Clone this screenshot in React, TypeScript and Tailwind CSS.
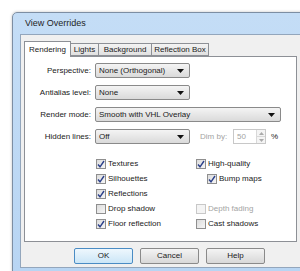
import React from 'react'

const tabs = [
  { title: 'Rendering', w: 'w-[47px]', active: true },
  { title: 'Lights', w: 'w-[28px]' },
  { title: 'Background', w: 'w-[53px]' },
  { title: 'Reflection Box', w: 'w-[57px]' },
]

const rows = [
  { label: 'Perspective:', value: 'None (Orthogonal)', w: 'w-[95px]' },
  { label: 'Antialias level:', value: 'None', w: 'w-[95px]' },
  { label: 'Render mode:', value: 'Smooth with VHL Overlay', w: 'w-[186px]' },
]

function Arrow() {
  return (
    <svg width="7" height="4" viewBox="0 0 7 4">
      <path d="M0 0h7L3.5 4z" fill="#111" />
    </svg>
  )
}

function Combo({ value, w }: { value: string; w: string }) {
  return (
    <div className={`${w} h-[15px] flex items-center justify-between rounded-[2px] border border-[#8a8a8a] bg-linear-to-b from-[#f4f4f4] to-[#dadada] pl-[3px] pr-[5px]`}>
      <span>{value}</span>
      <Arrow />
    </div>
  )
}

function Check({ label, checked, disabled }: { label: string; checked?: boolean; disabled?: boolean }) {
  return (
    <div className="flex h-[15px] items-center gap-[2px]">
      <div className={`flex h-[10px] w-[10px] items-center justify-center border ${disabled ? 'border-[#c8c8c8] bg-[#f4f4f4]' : 'border-[#8f8f8f] bg-linear-to-br from-[#dcdcdc] to-[#f6f6f6]'}`}>
        {checked && (
          <svg width="8" height="8" viewBox="0 0 8 8">
            <path d="M1 4.5L3 6.8L7 1" fill="none" stroke="#2a3f8a" strokeWidth="1.4" />
          </svg>
        )}
      </div>
      <span className={disabled ? 'text-[#a3a3a3]' : ''}>{label}</span>
    </div>
  )
}

function Button({ title, main }: { title: string; main?: boolean }) {
  return (
    <div
      className={`flex h-[16px] w-[59px] items-center justify-center rounded-[2px] border ${
        main
          ? 'border-[#4a8cc4] bg-linear-to-b from-[#eef7fd] to-[#cbe6f7]'
          : 'border-[#8a8a8a] bg-linear-to-b from-[#f4f4f4] to-[#d8d8d8]'
      }`}
    >
      {title}
    </div>
  )
}

export default function App() {
  return (
    <div className="h-[271px] w-[300px] overflow-hidden bg-white pl-[12px] pt-[12px] font-[family-name:Liberation_Sans,Arial,sans-serif] text-[8px] text-[#1a1a1a]">
      {/* Window frame */}
      <div className="w-[300px] rounded-tl-[5px] border border-[#7d8ea3] bg-linear-to-b from-[#c4ddf6] to-[#b8d5f3] px-[7px] pb-[3px] shadow-[0_0_3px_rgba(0,0,0,0.25)]">
        <div className="flex h-[21px] items-center pl-[5px] text-[9px] text-[#1e1e1e]">View Overrides</div>

        {/* Client area */}
        <div className="h-[234px] border border-[#93a6bc] bg-[#f0f0f0] pl-[3px] pt-[6px]">
          {/* Tabs */}
          <div className="flex h-[15px] items-end">
            {tabs.map((tab) => (
              <div
                key={tab.title}
                className={`${tab.w} flex items-center justify-center border border-[#8d9096] ${
                  tab.active
                    ? 'relative z-10 -mb-px h-[16px] border-b-0 bg-white'
                    : 'h-[13px] border-l-0 bg-linear-to-b from-[#f3f3f3] to-[#e1e1e1]'
                }`}
              >
                {tab.title}
              </div>
            ))}
          </div>

          {/* Panel */}
          <div className="h-[186px] w-[273px] border border-[#8d9096] bg-white pt-[6px]">
            <div className="flex flex-col gap-[7px]">
              {rows.map((row) => (
                <div key={row.label} className="flex items-center gap-[4px]">
                  <div className="w-[66px] text-right">{row.label}</div>
                  <Combo value={row.value} w={row.w} />
                </div>
              ))}
              <div className="flex items-center gap-[4px]">
                <div className="w-[66px] text-right">Hidden lines:</div>
                <Combo value="Off" w="w-[95px]" />
                <div className="ml-[6px] w-[29px] text-[#a3a3a3]">Dim by:</div>
                <div className="flex h-[15px] w-[33px] items-center justify-between border border-[#c8c8c8] pl-[3px] text-[#a3a3a3]">
                  <span>50</span>
                  <div className="flex h-full w-[9px] flex-col border-l border-[#d8d8d8] bg-[#f4f4f4]">
                    <div className="flex flex-1 items-center justify-center border-b border-[#d8d8d8]">
                      <svg width="5" height="3" viewBox="0 0 5 3"><path d="M0 3h5L2.5 0z" fill="#aaa" /></svg>
                    </div>
                    <div className="flex flex-1 items-center justify-center">
                      <svg width="5" height="3" viewBox="0 0 5 3"><path d="M0 0h5L2.5 3z" fill="#aaa" /></svg>
                    </div>
                  </div>
                </div>
                <div className="ml-[1px]">%</div>
              </div>
            </div>

            <div className="ml-[71px] mt-[12px] grid grid-cols-[100px_1fr]">
              <Check label="Textures" checked />
              <Check label="High-quality" checked />
              <Check label="Silhouettes" checked />
              <div className="pl-[11px]">
                <Check label="Bump maps" checked />
              </div>
              <Check label="Reflections" checked />
              <div />
              <Check label="Drop shadow" />
              <Check label="Depth fading" disabled />
              <Check label="Floor reflection" checked />
              <Check label="Cast shadows" />
            </div>
          </div>

          {/* Buttons */}
          <div className="mt-[6px] flex gap-[7px] pl-[50px]">
            <Button title="OK" main />
            <Button title="Cancel" />
            <Button title="Help" />
          </div>
        </div>
      </div>
    </div>
  )
}
